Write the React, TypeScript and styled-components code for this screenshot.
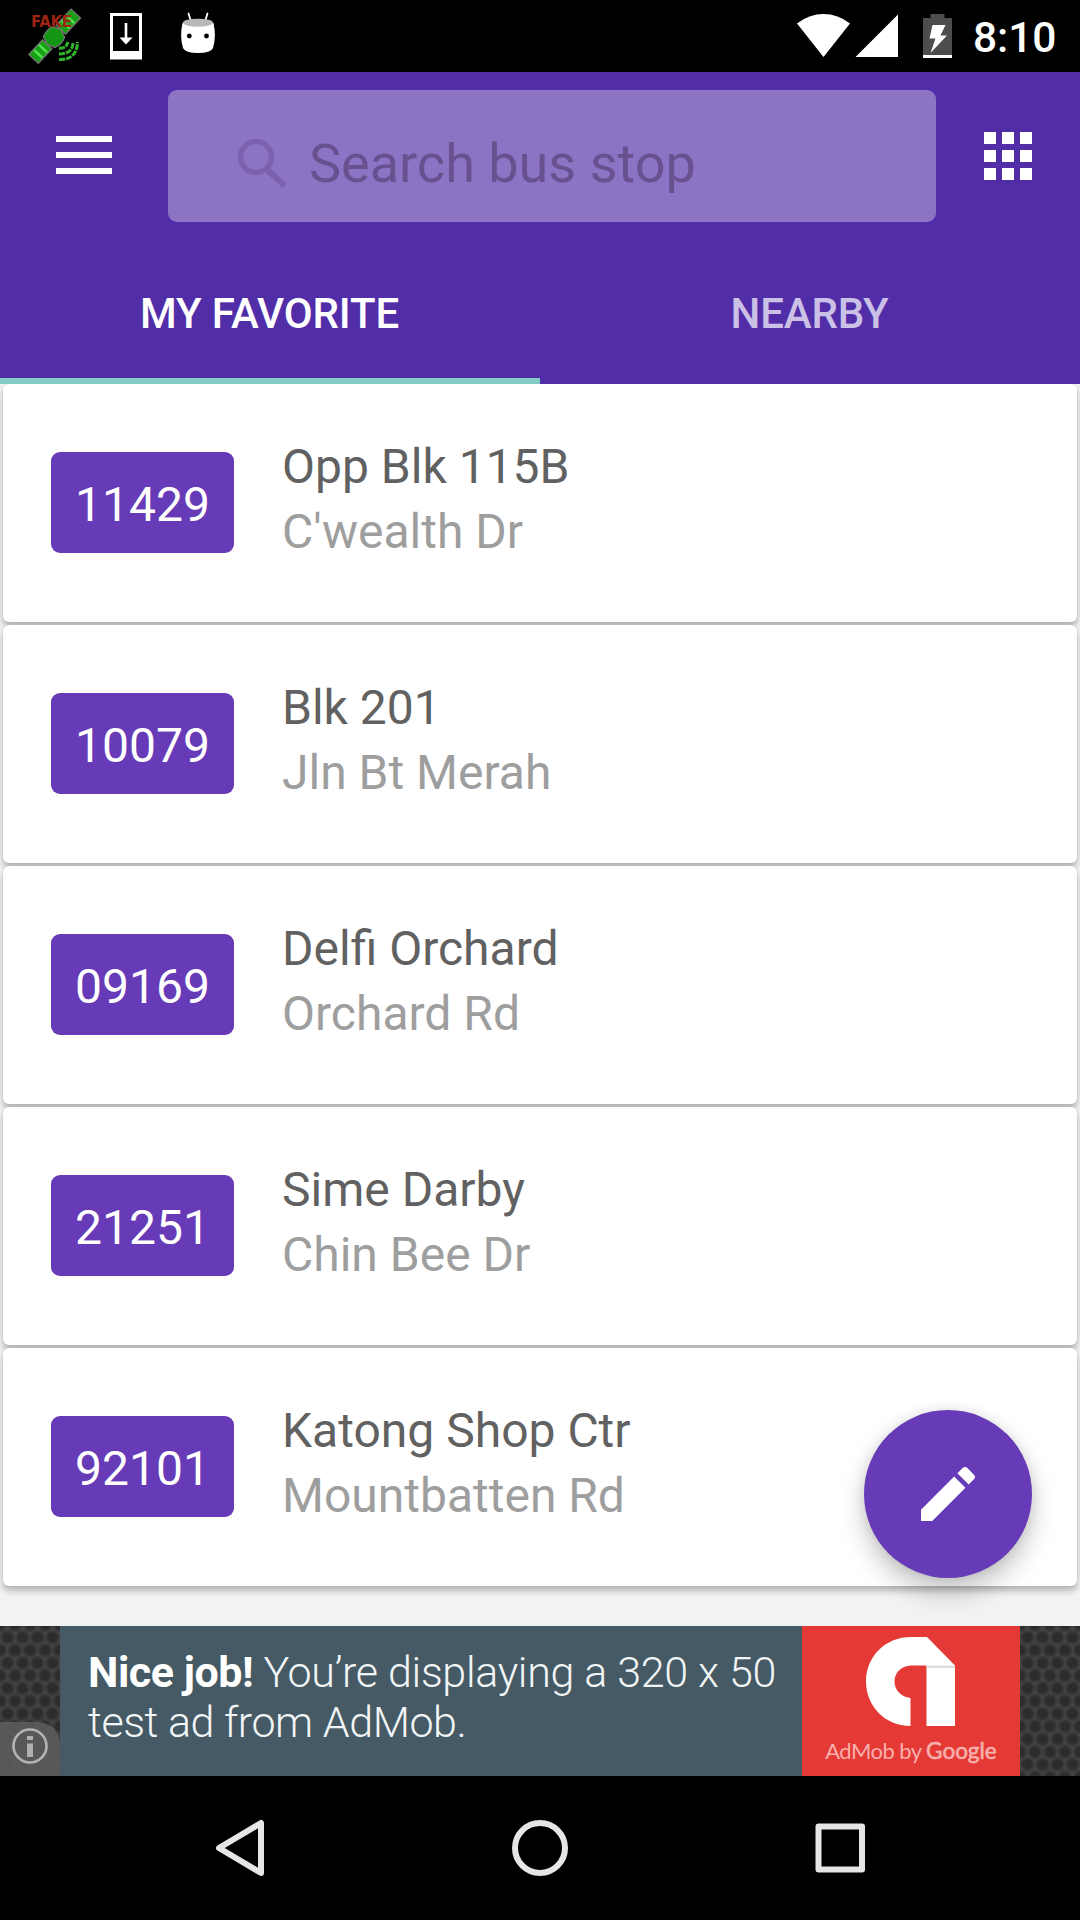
import React from "react";
import styled, { createGlobalStyle } from "styled-components";

const GlobalStyle = createGlobalStyle`
  * { box-sizing: border-box; }
  body { margin: 0; background: #000; font-family: Roboto, "Noto Sans", sans-serif; }
`;

const Screen = styled.div`
  position: relative;
  width: 1080px;
  height: 1920px;
  display: flex;
  flex-direction: column;
  background: #f2f2f2;
  overflow: hidden;
`;

const StatusBar = styled.div`
  height: 72px;
  flex: none;
  display: flex;
  justify-content: space-between;
  background: #000;
  color: #fff;
`;

const StatusGroup = styled.div`
  display: flex;
  align-items: center;
`;

const Clock = styled.span`
  width: 108px;
  padding-left: 1px;
  font-size: 42.500px;
  font-weight: 500;
  letter-spacing: -0.100px;
  line-height: 72px;
  padding-top: 4px;
`;

const Header = styled.header`
  height: 312px;
  flex: none;
  display: flex;
  flex-direction: column;
  justify-content: space-between;
  background: #512da8;
`;

const Toolbar = styled.div`
  display: flex;
  align-items: center;
  padding: 18px 48px 0 56px;
`;

const MenuButton = styled.button`
  display: flex;
  flex-direction: column;
  gap: 10px;
  width: 56px;
  padding: 0;
  margin: 0 56px 2px 0;
  border: 0;
  background: none;
`;

const MenuLine = styled.span`
  height: 6px;
  background: #fff;
`;

const SearchBox = styled.div`
  width: 768px;
  height: 132px;
  display: flex;
  align-items: center;
  padding: 15px 0 0 70px;
  border-radius: 9px;
  background: #8c74c5;
`;

const SearchHint = styled.span`
  margin-left: 19px;
  font-size: 54px;
  line-height: 64px;
  color: #67518f;
`;

const AppsButton = styled.button`
  display: grid;
  grid-template-columns: repeat(3, 12px);
  grid-auto-rows: 12px;
  gap: 6px;
  padding: 0;
  margin-left: auto;
  border: 0;
  background: none;
`;

const AppsCell = styled.span`
  background: #fff;
`;

const Tabs = styled.nav`
  display: flex;
  height: 144px;
`;

const Tab = styled.div<{ $active?: boolean }>`
  flex: 1;
  display: flex;
  align-items: center;
  justify-content: center;
  font-size: 42px;
  font-weight: 500;
  letter-spacing: -0.150px;
  padding: 8px 1px 0 0;
  border-bottom: 6px solid ${(p) => (p.$active ? "#80cbc4" : "transparent")};
  color: ${(p) => (p.$active ? "#fff" : "#cbc0e5")};
`;

const List = styled.main`
  flex: 1;
  display: flex;
  flex-direction: column;
  gap: 3px;
  padding: 0 3px;
  overflow: hidden;
`;

const Card = styled.article`
  height: 238px;
  flex: none;
  display: flex;
  align-items: center;
  padding: 0 48px;
  border-radius: 6px;
  background: #fff;
  box-shadow: 0 5px 6px rgba(0, 0, 0, 0.24), 0 0 3px rgba(0, 0, 0, 0.1);
`;

const StopCode = styled.div`
  width: 183px;
  height: 101px;
  margin: 0 48px 2px 0;
  display: flex;
  align-items: center;
  justify-content: center;
  padding-top: 4px;
  border-radius: 9px;
  background: #673ab7;
  color: #fff;
  font-size: 48px;
`;

const StopText = styled.div`
  display: flex;
  flex-direction: column;
  line-height: 65px;
  font-size: 48px;
  padding-bottom: 9px;
`;

const StopName = styled.span`
  color: #616161;
`;

const StopRoad = styled.span`
  color: #9e9e9e;
`;

const Fab = styled.button`
  position: absolute;
  left: 864px;
  top: 1410px;
  width: 168px;
  height: 168px;
  display: flex;
  align-items: center;
  justify-content: center;
  padding: 0;
  border: 0;
  border-radius: 50%;
  background: #673ab7;
  box-shadow: 0 14px 26px rgba(0, 0, 0, 0.22), 0 0 12px rgba(0, 0, 0, 0.1);
`;

const AdBanner = styled.aside`
  height: 150px;
  flex: none;
  display: flex;
  background: #303030;
`;

const AdEdge = styled.div`
  width: 60px;
  flex: none;
  display: flex;
  align-items: flex-end;
`;

const MeshTile = styled.svg`
  display: block;
`;

const AdCopy = styled.div`
  width: 742px;
  display: flex;
  flex-direction: column;
  padding: 21px 0 0 28px;
  background: #455a64;
  color: #f2f5f6;
  font-size: 43px;
  line-height: 50px;
  font-weight: 300;
  white-space: nowrap;
`;

const AdLine = styled.span<{ $tracking: number }>`
  letter-spacing: ${(p) => p.$tracking}px;
`;

const AdStrong = styled.b`
  color: #fff;
  font-weight: 700;
  letter-spacing: -0.450px;
`;

const AdBrand = styled.div`
  width: 218px;
  display: flex;
  flex-direction: column;
  align-items: center;
  padding-top: 11px;
  background: #e53935;
`;

const AdCaption = styled.span`
  margin-top: 10px;
  font-family: Lato, sans-serif;
  font-size: 22px;
  line-height: 28px;
  letter-spacing: -0.550px;
  color: #f7b0ad;
  white-space: nowrap;
`;

const CaptionStrong = styled.span`
  font-size: 22.500px;
  letter-spacing: 0;
  -webkit-text-stroke: 0.600px #f7b0ad;
`;

const NavBar = styled.footer`
  height: 144px;
  flex: none;
  display: flex;
  align-items: center;
  justify-content: center;
  gap: 228px;
  background: #000;
`;

const stops = [
  { code: "11429", name: "Opp Blk 115B", road: "C'wealth Dr" },
  { code: "10079", name: "Blk 201", road: "Jln Bt Merah" },
  { code: "09169", name: "Delfi Orchard", road: "Orchard Rd" },
  { code: "21251", name: "Sime Darby", road: "Chin Bee Dr" },
  { code: "92101", name: "Katong Shop Ctr", road: "Mountbatten Rd" },
];

const FakeLabel = styled.text`
  font-family: "DejaVu Sans", sans-serif;
  font-weight: 700;
  font-size: 15px;
  fill: #9c2412;
`;

const StatusIcons = () => (
  <svg width="240" height="72" viewBox="0 0 240 72">
    <g transform="translate(54 37) rotate(-47)" stroke="#777" strokeWidth="1.200">
      <rect x="-30" y="-6.500" width="20" height="13" fill="#18a018" />
      <rect x="10" y="-6.500" width="22" height="13" fill="#18a018" />
      <path d="M-23-5.500v11M-16-5.500v11M17-5.500v11M24-5.500v11" stroke="#4ee64a" strokeWidth="2.500" />
      <path d="M-7-8Q0-11 7-8L10 0 7 8Q0 11-7 8L-10 0Z" fill="#149614" />
    </g>
    <path d="M59 48Q66 49 68 42M59 54Q73 54 73 42M59 59.500Q77 60 77.500 42" fill="none" stroke="#2fb52d" strokeWidth="3" strokeDasharray="6 1" />
    <FakeLabel x="31" y="26.500" textLength="41">FAKE</FakeLabel>
    <path fillRule="evenodd" fill="#fff" d="M110 13h32v46.500h-32zM113 16v35h26V16z" />
    <path fill="#fff" d="M124.700 23h2.600v14.500h5.200L126 44.500l-6.500-7h5.200z" />
    <path d="M188.500 13.500l2.500 8M207.500 13.500l-2.500 8" stroke="#fff" strokeWidth="1.800" strokeLinecap="round" />
    <path fill="#fff" d="M182.500 23Q198 18 213.500 23Q216.500 37 213 48Q211 53 198 53Q185 53 183 48Q179.500 37 182.500 23Z" />
    <ellipse cx="198" cy="22.700" rx="15" ry="4" fill="#b8b8b8" />
    <circle cx="189.300" cy="36" r="2.400" />
    <circle cx="206.500" cy="36" r="2.400" />
  </svg>
);

const SignalIcons = () => (
  <svg width="176" height="72" viewBox="796 0 176 72">
    <path fill="#fff" d="M797 23.500Q809 14 823.500 14Q838 14 850 23.500L823.500 57Z" />
    <path fill="#fff" d="M898 14.500V57H855.500Z" />
    <path fill="#4d4d4d" d="M930.500 14H944.500V18H952V55H923V18H930.500Z" />
    <path fill="#fff" d="M923 55H952V58H923ZM932.500 25H945.500L940.500 35.500H947L930.500 53L935.500 38.500H929.500Z" />
  </svg>
);

const SearchIcon = () => (
  <svg width="52" height="52" viewBox="238 138 52 52">
    <circle cx="256" cy="157" r="15.500" fill="none" stroke="#7c62ae" strokeWidth="5.400" />
    <path d="M268 170.500L284.800 185.800" stroke="#7c62ae" strokeWidth="6" />
    <circle cx="269.500" cy="171.800" r="3" fill="#7c62ae" />
  </svg>
);

const PencilIcon = () => (
  <svg width="72" height="72" viewBox="0 0 24 24" fill="#fff">
    <path d="M3 17.250V21h3.750L17.810 9.940l-3.750-3.750L3 17.250zM20.710 7.040c.39-.39.39-1.020 0-1.410l-2.340-2.340c-.39-.39-1.020-.39-1.410 0l-1.830 1.830 3.750 3.750 1.830-1.830z" />
  </svg>
);

const meshDots = [
  [7.5, 11.5],
  [0, -1.2],
  [15, -1.2],
  [0, 24.2],
  [15, 24.2],
];

const Mesh = ({ id, info }: { id: string; info?: boolean }) => (
  <MeshTile width="60" height="150" viewBox="0 0 60 150">
    <defs>
      <radialGradient id={`${id}-dot`}>
        <stop offset="0.500" stopColor="#2c2c2c" />
        <stop offset="1" stopColor="#2c2c2c" stopOpacity="0" />
      </radialGradient>
      <pattern id={id} width="15" height="25.400" patternUnits="userSpaceOnUse">
        {meshDots.map(([cx, cy]) => (
          <circle key={`${cx}-${cy}`} cx={cx} cy={cy} r="8" fill={`url(#${id}-dot)`} />
        ))}
      </pattern>
    </defs>
    <rect width="60" height="150" fill="#444" />
    <rect width="60" height="150" fill={`url(#${id})`} />
    {info && (
      <g>
        <path d="M0 96H38Q60 98 60 120V150H0Z" fill="#5c5c5c" fillOpacity="0.900" />
        <circle cx="30" cy="120" r="16.500" fill="none" stroke="#b4b4b4" strokeWidth="2.600" />
        <path d="M27 117.500h6v13.500h-6zM27 110h6v4h-6z" fill="#b0b0b0" />
      </g>
    )}
  </MeshTile>
);

const AdMobLogo = () => (
  <svg width="90" height="90" viewBox="866 1637 90 90">
    <path fill="#fff" d="M911 1637H927L955 1665.500V1726H926.500V1665.500H911C901 1666 894.500 1673 894.500 1681.500C894.500 1690 901 1697 910.500 1698V1726C885 1726 866 1706 866 1681.500C866 1656 886 1637 911 1637Z" />
    <path fill="#ddd" d="M926.500 1665.500H955V1668H926.500Z" />
  </svg>
);

const NavIcon = ({ children }: { children: React.ReactNode }) => (
  <svg width="72" height="72" viewBox="0 0 72 72" fill="none" stroke="#e6e6e6" strokeWidth="6" strokeLinejoin="round">
    {children}
  </svg>
);

export default function App() {
  return (
    <Screen>
      <GlobalStyle />
      <StatusBar>
        <StatusGroup>
          <StatusIcons />
        </StatusGroup>
        <StatusGroup>
          <SignalIcons />
          <Clock>8:10</Clock>
        </StatusGroup>
      </StatusBar>
      <Header>
        <Toolbar>
          <MenuButton aria-label="Menu">
            <MenuLine />
            <MenuLine />
            <MenuLine />
          </MenuButton>
          <SearchBox>
            <SearchIcon />
            <SearchHint>Search bus stop</SearchHint>
          </SearchBox>
          <AppsButton aria-label="Apps">
            {Array.from({ length: 9 }, (_, i) => (
              <AppsCell key={i} />
            ))}
          </AppsButton>
        </Toolbar>
        <Tabs>
          <Tab $active>MY FAVORITE</Tab>
          <Tab>NEARBY</Tab>
        </Tabs>
      </Header>
      <List>
        {stops.map((s) => (
          <Card key={s.code}>
            <StopCode>{s.code}</StopCode>
            <StopText>
              <StopName>{s.name}</StopName>
              <StopRoad>{s.road}</StopRoad>
            </StopText>
          </Card>
        ))}
      </List>
      <AdBanner>
        <AdEdge>
          <Mesh id="mesh-left" info />
        </AdEdge>
        <AdCopy>
          <AdLine $tracking={-0.3}>
            <AdStrong>Nice job!</AdStrong> You’re displaying a 320 x 50
          </AdLine>
          <AdLine $tracking={-0.45}>test ad from AdMob.</AdLine>
        </AdCopy>
        <AdBrand>
          <AdMobLogo />
          <AdCaption>
            AdMob by <CaptionStrong>Google</CaptionStrong>
          </AdCaption>
        </AdBrand>
        <AdEdge>
          <Mesh id="mesh-right" />
        </AdEdge>
      </AdBanner>
      <NavBar>
        <NavIcon>
          <path d="M57 11V61L15 36Z" />
        </NavIcon>
        <NavIcon>
          <circle cx="36" cy="36" r="25" />
        </NavIcon>
        <NavIcon>
          <rect x="14.500" y="14.500" width="43.500" height="43" />
        </NavIcon>
      </NavBar>
      <Fab aria-label="Edit favorites">
        <PencilIcon />
      </Fab>
    </Screen>
  );
}
